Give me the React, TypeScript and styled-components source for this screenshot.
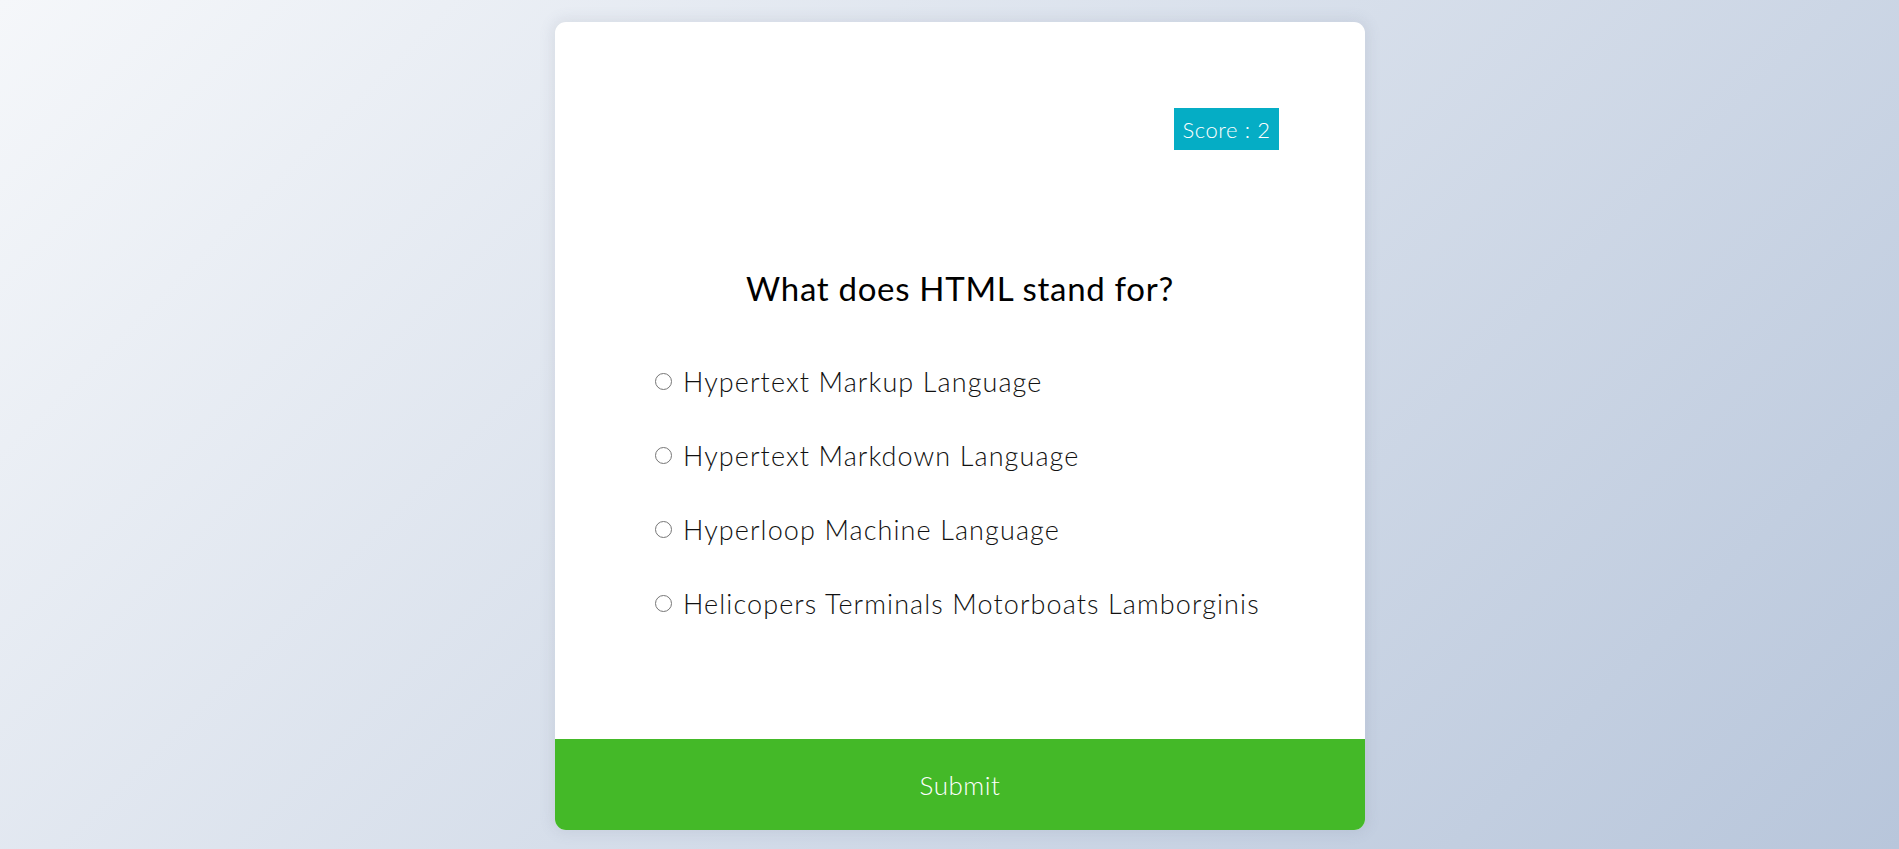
import React from "react";
import styled, { createGlobalStyle } from "styled-components";

const GlobalStyle = createGlobalStyle`
  html, body {
    margin: 0;
    padding: 0;
    height: 100%;
    overflow: hidden;
  }
  body {
    font-family: "Lato", "Open Sans", sans-serif;
    background-image: linear-gradient(135deg, #f5f7fa 0%, #b8c6db 100%);
    min-height: 100vh;
  }
`;

const Page = styled.main`
  display: flex;
  justify-content: center;
  padding: 22px 0 0 21px;
  min-height: 100vh;
  box-sizing: border-box;
`;

const Card = styled.section`
  width: 810px;
  height: 808px;
  background: #ffffff;
  border-radius: 11px;
  box-shadow: 0 0 14px 3px rgba(100, 110, 130, 0.12);
  overflow: hidden;
  display: flex;
  flex-direction: column;
`;

const Body = styled.div`
  flex: 1;
  padding: 86px 86px 0;
  display: flex;
  flex-direction: column;
`;

const ScoreRow = styled.div`
  display: flex;
  justify-content: flex-end;
`;

const ScoreBadge = styled.span`
  background: #05adc5;
  color: #ffffff;
  font-weight: 300;
  font-size: 22px;
  letter-spacing: 0.6px;
  height: 42px;
  width: 105px;
  display: flex;
  align-items: center;
  justify-content: center;
`;

const Question = styled.h2`
  margin: 114px 0 32px;
  text-align: center;
  font-weight: 400;
  font-size: 33px;
  line-height: 48px;
  color: #000000;
  letter-spacing: 0.7px;
`;

const Options = styled.ul`
  list-style: none;
  margin: 0;
  padding: 0 0 0 14px;
`;

const Option = styled.li`
  height: 74px;
  display: flex;
  align-items: center;
  gap: 11px;
`;

const Radio = styled.input`
  width: 17px;
  height: 17px;
  margin: 0;
  appearance: none;
  border: 1.5px solid #767676;
  border-radius: 50%;
  box-sizing: border-box;
  flex: none;
  &:checked {
    background: radial-gradient(circle, #0075ff 45%, transparent 50%);
    border-color: #0075ff;
  }
`;

const OptionLabel = styled.label`
  font-size: 27px;
  font-weight: 300;
  color: #111111;
  letter-spacing: 1.1px;
  cursor: pointer;
`;

const Submit = styled.button`
  flex: none;
  height: 91px;
  width: 100%;
  border: none;
  background: #44b928;
  color: #ffffff;
  font-family: inherit;
  font-size: 26px;
  font-weight: 300;
  letter-spacing: 0.5px;
  cursor: pointer;
`;

const answers = [
  "Hypertext Markup Language",
  "Hypertext Markdown Language",
  "Hyperloop Machine Language",
  "Helicopers Terminals Motorboats Lamborginis",
];

export default function App() {
  return (
    <>
      <GlobalStyle />
      <Page>
        <Card>
          <Body>
            <ScoreRow>
              <ScoreBadge>Score : 2</ScoreBadge>
            </ScoreRow>
            <Question>What does HTML stand for?</Question>
            <Options>
              {answers.map((a, i) => (
                <Option key={a}>
                  <Radio type="radio" name="answer" id={`a${i}`} />
                  <OptionLabel htmlFor={`a${i}`}>{a}</OptionLabel>
                </Option>
              ))}
            </Options>
          </Body>
          <Submit>Submit</Submit>
        </Card>
      </Page>
    </>
  );
}
